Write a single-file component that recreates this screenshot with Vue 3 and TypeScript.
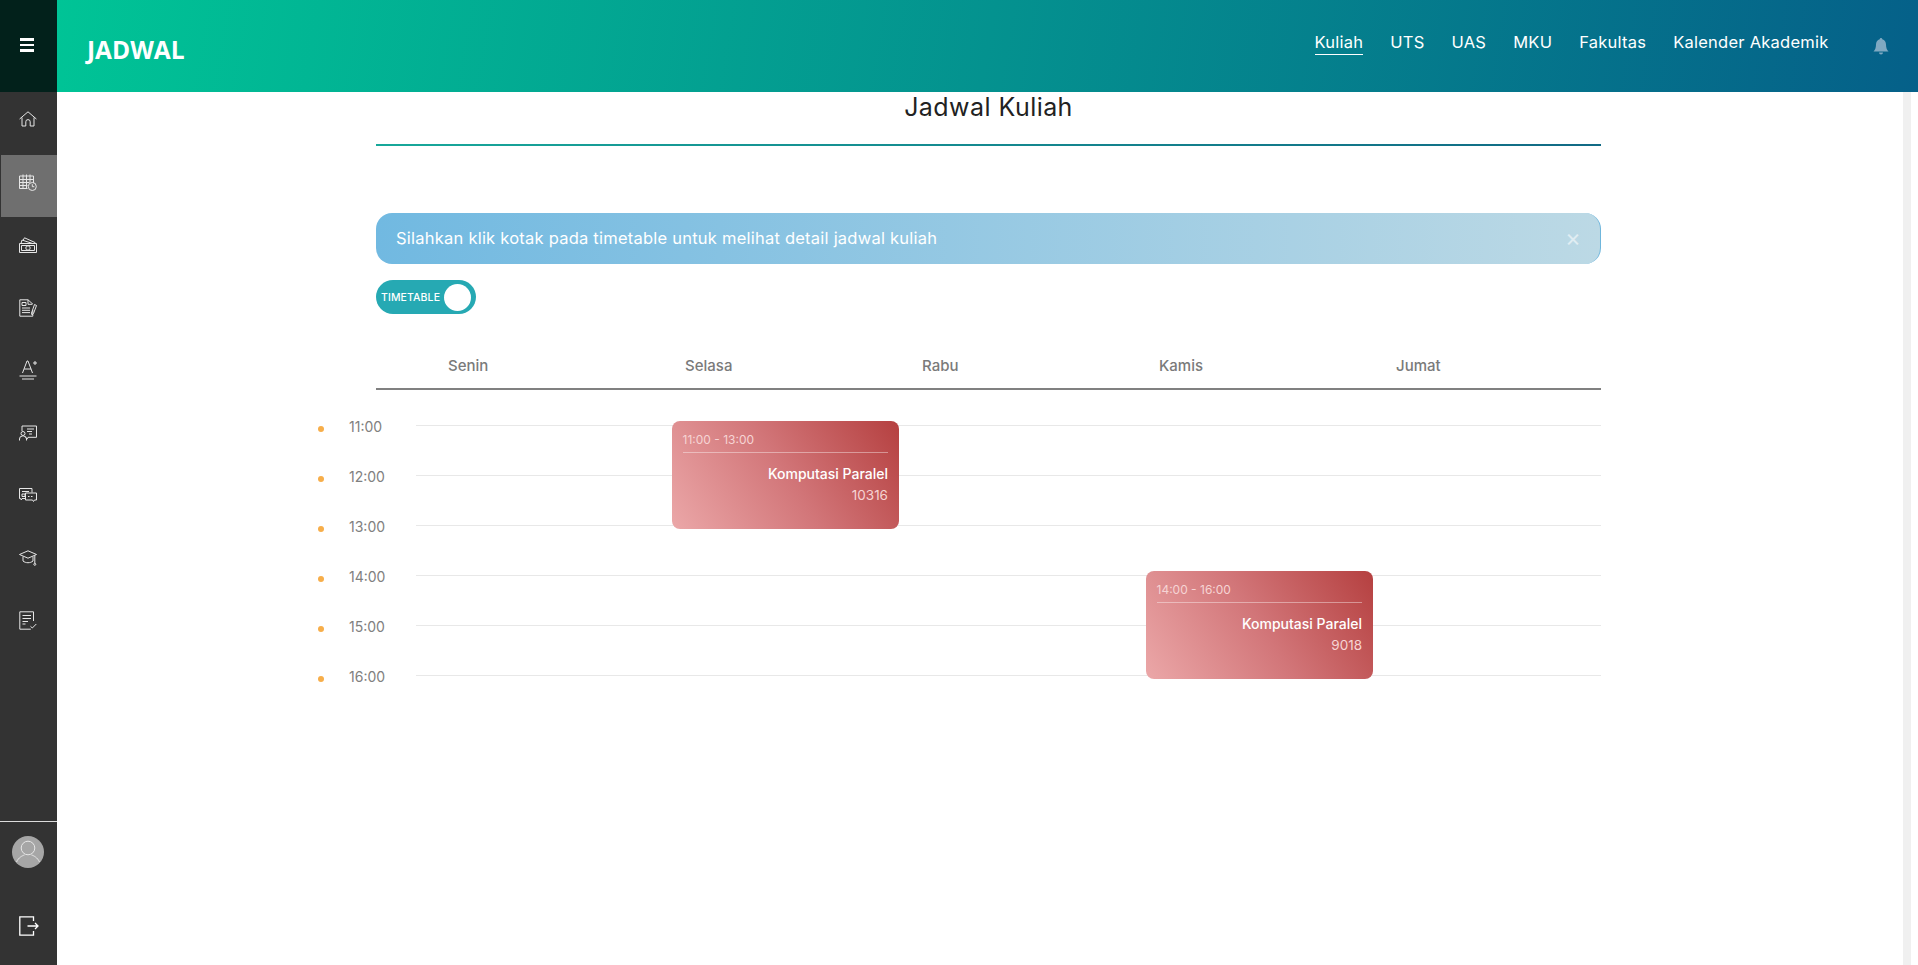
<script setup lang="ts">
const navLinks: string[] = ['Kuliah', 'UTS', 'UAS', 'MKU', 'Fakultas', 'Kalender Akademik']
const days: string[] = ['Senin', 'Selasa', 'Rabu', 'Kamis', 'Jumat']
const hours: string[] = ['11:00', '12:00', '13:00', '14:00', '15:00', '16:00']
const rowHeight = 50
const dayWidth = 237
const events = [
  { time: '11:00 - 13:00', name: 'Komputasi Paralel', room: '10316', day: 1, start: 0 },
  { time: '14:00 - 16:00', name: 'Komputasi Paralel', room: '9018', day: 3, start: 3 },
]
function eventStyle(e: { day: number; start: number }) {
  return { left: `${e.day * dayWidth + 20}px`, top: `${e.start * rowHeight - 4}px` }
}
</script>

<template>
  <div class="page">
    <aside class="side">
      <button class="burger" aria-label="menu"><span></span><span></span><span></span></button>
      <nav class="menu">
        <a class="item">
          <svg class="home" viewBox="0 0 18 16" width="18" height="16"><path d="M.6 8 9 .8 17.4 8M3 6.5V15h3.8v-4.2a2.2 2.2 0 0 1 4.4 0V15H15V6.5" /></svg>
        </a>
        <a class="item active">
          <svg viewBox="0 0 18 17" width="18" height="17"><path d="M.5 2h14v7M.5 2v12.5h8M.5 5.5h14M.5 8.500h10M.5 11.500h8M4 .5v14M7.500.5v14M11 .5v8" /><circle cx="13.300" cy="12.500" r="4" /><path d="M13.300 10.200v2.500h2" /></svg>
        </a>
        <a class="item">
          <svg viewBox="0 0 18 16" width="18" height="16"><path d="M.5 6.500h17v9H.5zM2.500 8.500h13v5h-13z" /><circle cx="9" cy="11" r="2.200" /><path d="M2 6.500 3 3l10.500 3.500M4 3.500 5.500.8 16 5.500V6.500" /></svg>
        </a>
        <a class="item">
          <svg viewBox="0 0 18 18" width="18" height="18"><path d="M9 .8H.8v16.400h13V11M9 .8l5 4.500M9 .8v4.500h4" /><path d="M3 3.500h4v3H3zM3 9h8M3 11.300h8M3 13.600h8" /><path d="m15.500 5.500 2 1-3 8-1.500 1.500-.5-2z" /></svg>
        </a>
        <a class="item">
          <svg viewBox="0 0 18 20" width="18" height="20"><path d="m3.500 13 4.500-12h1l4.500 12M5.200 9h7M14 3h4M16 1v4" /><path d="M.5 16h17M3 19h12" /></svg>
        </a>
        <a class="item">
          <svg viewBox="0 0 18 16" width="18" height="16"><path d="M3 6V1h14.500v11.300H9l-1 1.800-1.500-1.800" /><circle cx="4" cy="8.500" r="2" /><path d="M.5 15.500v-1.500a3 3 0 0 1 3-3h1a3 3 0 0 1 3 3v1.500M8 4h7M8 6.500h5M10 9h3" /></svg>
        </a>
        <a class="item">
          <svg viewBox="0 0 18 14" width="18" height="14"><path d="M6 10.500H3l-.7 1.500-.8-1.500H.5V.5h12.500v4M3 3.500h7M3 6h3v2.500H3z" /><path d="M6.500 5h11v7h-2l-1 1.500-1-1.500h-7zM9 8.500h1.500M12 8.500h1.500" /></svg>
        </a>
        <a class="item">
          <svg viewBox="0 0 18 16" width="18" height="16"><path d="M.5 4.500 9 .8l8.500 3.700L9 8.200zM4 6.500V11c2.500 2.300 7.500 2.300 10 0V6.500M15.800 5.500V13" /><circle cx="15.800" cy="14.300" r="1" /></svg>
        </a>
        <a class="item">
          <svg viewBox="0 0 18 19" width="18" height="19"><path d="M14.500 10V.8H.8v17.400h11M3.500 4.500h8.500M3.500 7.500h8.500M3.500 10.500h5.500M3.500 13h3" /><path d="m11.500 15.300 1.800 1.700 4-4" /></svg>
        </a>
      </nav>
      <div class="side-foot">
        <div class="avatar">
          <svg viewBox="0 0 32 32" width="32" height="32"><circle cx="16" cy="12" r="6.800" /><path d="M4.500 26c2-4.500 6-6.500 8-7M27.500 26c-2-4.500-6-6.500-8-7" /></svg>
        </div>
        <div class="logout">
          <svg viewBox="0 0 20 20" width="20" height="20"><path d="M14.500 5V.8H.8v18.400h13.700V15M8.500 10h10.500M16 7l3 3-3 3" /></svg>
        </div>
      </div>
    </aside>

    <div class="main">
      <header class="top">
        <div class="brand">JADWAL</div>
        <nav class="links">
          <a v-for="(l, i) in navLinks" :key="l" class="link" :class="{ current: i === 0 }">{{ l }}</a>
        </nav>
        <svg class="bell" viewBox="0 0 16 17" width="16" height="17"><path d="M8 0c.8 0 1.300.6 1.300 1.300C11.800 2 13 4 13 6.500c0 3.500 1 5.500 2.500 7H.5C2 12 3 10 3 6.500 3 4 4.200 2 6.700 1.300 6.700.6 7.200 0 8 0zM6 14.500h4a2 2 0 0 1-4 0z" /></svg>
      </header>

      <div class="body">
        <main class="content">
          <div class="sheet">
            <h1 class="title">Jadwal Kuliah</h1>
            <div class="rule"></div>

            <div class="alert">
              <span>Silahkan klik kotak pada timetable untuk melihat detail jadwal kuliah</span>
              <span class="close">×</span>
            </div>

            <div class="toggle">
              <span>TIMETABLE</span>
              <i class="knob"></i>
            </div>

            <div class="days">
              <span v-for="d in days" :key="d" class="day">{{ d }}</span>
            </div>

            <div class="table">
              <div v-for="h in hours" :key="h" class="row">
                <i class="dot"></i>
                <span class="hour">{{ h }}</span>
                <span class="line"></span>
              </div>
              <div class="events">
                <article v-for="e in events" :key="e.room" class="event" :style="eventStyle(e)">
                  <div class="ev-time">{{ e.time }}</div>
                  <div class="ev-name">{{ e.name }}</div>
                  <div class="ev-room">{{ e.room }}</div>
                </article>
              </div>
            </div>
          </div>
        </main>
        <div class="scroll"></div>
      </div>
    </div>
  </div>
</template>

<style>
html, body { margin: 0; background: #fff; }
</style>

<style scoped>
.page {
  display: flex;
  width: 1918px;
  height: 965px;
  overflow: hidden;
  font-family: Inter, "Liberation Sans", sans-serif;
  color: #777;
}
.side {
  width: 57px;
  flex: none;
  display: flex;
  flex-direction: column;
  background: #333;
}
.burger {
  height: 92px;
  flex: none;
  border: 0;
  padding: 0 4px 2px 0;
  background: #02211b;
  display: flex;
  flex-direction: column;
  align-items: center;
  justify-content: center;
  gap: 3px;
}
.burger span { width: 14px; height: 2.500px; background: #fff; }
.menu { display: flex; flex-direction: column; }
.item {
  height: 62.600px;
  display: flex;
  align-items: center;
  justify-content: center;
  padding: 0 2px 7px 0;
  box-sizing: border-box;
}
.item.active { background: #6f6f6f; margin-left: 1px; padding-right: 3px; }
.item svg, .avatar svg, .logout svg { fill: none; stroke: #e6e6e6; stroke-width: 1; }
.item svg.home { margin-bottom: 2px; }
.side-foot {
  margin-top: auto;
  height: 144px;
  border-top: 1.500px solid #ddd;
  box-sizing: border-box;
  display: flex;
  flex-direction: column;
  align-items: center;
}
.avatar {
  width: 32px;
  height: 32px;
  margin: 14px 2px 0 0;
  border-radius: 50%;
  background: #a6a6a6;
  overflow: hidden;
}
.logout { margin-top: 48px; height: 20px; }
.logout svg { stroke: #fff; stroke-width: 1.300; }

.main { flex: 1; min-width: 0; display: flex; flex-direction: column; }
.top {
  height: 92px;
  flex: none;
  display: flex;
  align-items: center;
  padding: 0 29.500px 0 30px;
  background: linear-gradient(100deg, #00c496 0%, #04928f 50%, #056089 100%);
  color: #fff;
}
.brand {
  font-family: "Open Sans", sans-serif;
  font-weight: 700;
  font-size: 24.500px;
  margin-top: 6px;
}
.links {
  margin-left: auto;
  display: flex;
  gap: 27px;
  margin-top: -5.600px;
}
.link {
  font-size: 16.500px;
  letter-spacing: .24px;
  line-height: 22px;
  padding-bottom: .6px;
  border-bottom: 1px solid transparent;
}
.link.current { border-bottom-color: #fff; }
.bell { fill: #7fa9c2; margin-left: 44px; margin-top: 0; }

.body { flex: 1; display: flex; min-height: 0; }
.content { flex: 1; min-width: 0; position: relative; }
.scroll { width: 8px; background: #f0f0f0; margin-right: 7px; flex: none; }
.sheet { width: 1225px; margin-left: 319px; }
.title {
  margin: 0;
  height: 52px;
  box-sizing: border-box;
  text-align: center;
  font-size: 25px;
  letter-spacing: .45px;
  line-height: 30px;
  font-weight: 400;
  color: #222;
}
.rule { height: 2px; background: linear-gradient(90deg, #17a89a, #116a85); }
.alert {
  margin-top: 67px;
  height: 51px;
  box-sizing: border-box;
  padding: 0 20px 2px;
  display: flex;
  align-items: center;
  justify-content: space-between;
  border-radius: 16px;
  border-right: 1px solid #6fb6dc;
  background: linear-gradient(90deg, #71b9e1, #bcd9e5);
  color: #fff;
  font-size: 16.500px;
  letter-spacing: .23px;
}
.close { font-size: 24px; opacity: .55; line-height: 1; margin-right: -1px; }
.toggle {
  margin-top: 16px;
  width: 100px;
  height: 34px;
  border-radius: 17px;
  background: #26a9b3;
  display: flex;
  align-items: center;
  justify-content: space-between;
  box-sizing: border-box;
  padding: 0 4px 0 5px;
  color: #fff;
  font-size: 10.500px;
  font-weight: 500;
  letter-spacing: .1px;
}
.knob { width: 27px; height: 27px; border-radius: 50%; background: #fff; margin-right: 1px; }
.days {
  margin-top: 33px;
  height: 41px;
  display: flex;
  align-items: flex-start;
  padding-left: 72px;
  border-bottom: 2px solid #808080;
}
.day { width: 237px; flex: none; font-size: 15px; line-height: 38px; font-weight: 500; color: #7a7a7a; }
.table { position: relative; margin-left: -58px; margin-top: 35px; }
.row {
  height: 50px;
  display: flex;
  align-items: flex-start;
}
.dot { width: 6px; height: 6px; border-radius: 50%; background: #f7ae4a; margin: 1px 0 0 0; flex: none; }
.hour { width: 92px; padding-left: 25px; box-sizing: border-box; font-size: 14px; line-height: 0; margin-top: 2px; color: #808080; }
.line { flex: 1; height: 1px; background: #e8e8e8; }
.events { position: absolute; left: 96.500px; top: 0; }
.event {
  position: absolute;
  width: 227.500px;
  height: 108px;
  box-sizing: border-box;
  padding: 10px 11px;
  border-radius: 8px;
  background: linear-gradient(57deg, #eba7a8 0%, #d27679 50%, #b54040 100%);
  color: #fff;
  text-align: right;
}
.ev-time {
  text-align: left;
  font-size: 12px;
  line-height: 18px;
  padding-bottom: 3px;
  border-bottom: 1px solid rgba(255, 255, 255, .4);
  color: #f6d4d4;
}
.ev-name { margin-top: 11px; font-size: 14px; line-height: 20px; font-weight: 500; }
.ev-room { margin-top: 2px; font-size: 13.500px; line-height: 19px; color: #f6d4d4; }
</style>
